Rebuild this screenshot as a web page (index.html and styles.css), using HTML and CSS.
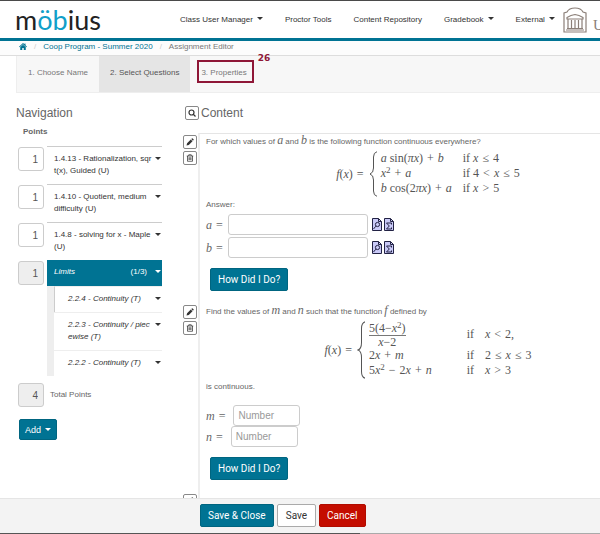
FILE: index.html
```html
<!DOCTYPE html>
<html lang="en">
<head>
<meta charset="utf-8">
<title>Assignment Editor</title>
<link rel="stylesheet" href="styles.css">
</head>
<body>
<svg class="defs" aria-hidden="true">
  <symbol id="pencil" viewBox="0 0 16 16"><path d="M1 15l1.200-4.600L9.600 3l3.400 3.400-7.400 7.400zM10.600 2l1.200-1.200q.7-.6 1.500.1l1.800 1.800q.7.800 0 1.500L13.900 5.400z"/></symbol>
  <symbol id="trash" viewBox="0 0 16 16"><path fill="none" stroke="currentColor" stroke-width="1.500" d="M1.500 4h13M5.500 4V1.500h5V4M3 4v10.500h10V4M6 6.500v5.500M8 6.500v5.500M10 6.500v5.500"/></symbol>
  <symbol id="search" viewBox="0 0 16 16"><g fill="none" stroke="currentColor" stroke-width="2.400"><circle cx="7" cy="7" r="5"/><path d="M10.500 10.500l4.500 4.500"/></g></symbol>
  <symbol id="preview" viewBox="0 0 10 13"><path class="sheet" d="M.5.5h6l3 3v9h-9z"/><path class="ink" d="M6.500.5v3h3M1.500 11l2.300-2.800"/><circle class="ink" cx="5.500" cy="6.500" r="2.100"/></symbol>
  <symbol id="sigma" viewBox="0 0 10 13"><path class="sheet" d="M.5.5h6l3 3v9h-9z"/><path class="ink" d="M6.500.5v3h3M7.500 6.500V5H2.500l2.800 3-2.800 3h5V9.500"/></symbol>
</svg>

<header class="topbar">
  <a class="brand" href="#">m<span>öb</span>ius</a>
  <nav class="menu">
    <a class="caret" href="#">Class User Manager</a>
    <a href="#">Proctor Tools</a>
    <a href="#">Content Repository</a>
    <a class="caret" href="#">Gradebook</a>
    <a class="caret" href="#">External</a>
  </nav>
  <svg class="crest" viewBox="0 0 24 26" aria-hidden="true">
    <path d="M1 25V6L4 5Q6 1 12 1Q18 1 20 5L23 6V25z"/>
    <path d="M4 10.500Q8 8 12 7.500Q16 8 20 10.500V12H4zM5 12v9M8.500 13v8M12 13v8M15.500 13v8M19 12v9M4 21.500h16M3 23h18"/>
  </svg>
  <span class="school">U</span>
</header>

<nav class="crumbs">
  <a href="#" aria-label="Home"><svg viewBox="0 0 16 14"><path d="M8 0l3 2.700V1h2v3.500l3 2.800-1 1L8 2.300 1 8.300l-1-1zM8 3.500l5.500 4.700V14H9.500v-4h-3v4h-4V8.200z"/></svg></a>
  <i>/</i>
  <a href="#">Coop Program - Summer 2020</a>
  <i>/</i>
  <span>Assignment Editor</span>
</nav>

<nav class="steps">
  <a href="#">1. Choose Name</a>
  <a class="current" href="#">2. Select Questions</a>
  <a class="marked" href="#"><span>3. Properties</span><b>26</b></a>
</nav>

<main class="work">
  <section class="side">
    <h2>Navigation</h2>
    <h3>Points</h3>
    <div class="item"><input class="pts" value="1" aria-label="Points 1.4.13"><div class="name caret">1.4.13 - Rationalization, sqr<br>t(x), Guided (U)</div></div>
    <div class="item"><input class="pts" value="1" aria-label="Points 1.4.10"><div class="name caret">1.4.10 - Quotient, medium<br>difficulty (U)</div></div>
    <div class="item"><input class="pts" value="1" aria-label="Points 1.4.8"><div class="name caret">1.4.8 - solving for x - Maple<br>(U)</div></div>
    <div class="item group">
      <input class="pts" value="1" readonly aria-label="Points Limits">
      <div class="limits">
        <div class="head caret"><em>Limits</em><span>(1/3)</span></div>
        <ul>
          <li class="caret open">2.2.4 - Continuity (T)</li>
          <li class="caret">2.2.3 - Continuity / piec<br>ewise (T)</li>
          <li class="caret">2.2.2 - Continuity (T)</li>
        </ul>
      </div>
    </div>
    <div class="total"><input class="pts" id="total" value="4" readonly><label for="total">Total Points</label></div>
    <button class="add caret">Add</button>
  </section>

  <section class="content">
    <div class="title"><button class="tool" aria-label="Search"><svg><use href="#search"/></svg></button><h2>Content</h2></div>

    <article class="question first">
      <div class="tools">
        <button class="tool" aria-label="Edit"><svg><use href="#pencil"/></svg></button>
        <button class="tool" aria-label="Delete"><svg><use href="#trash"/></svg></button>
      </div>
      <div class="body">
        <p>For which values of <var>a</var> and <var>b</var> is the following function continuous everywhere?</p>
        <div class="formula">
          <div class="math"><var>f</var>(<var>x</var>) <s>=</s></div>
          <svg class="brace" viewBox="0 0 8 46" preserveAspectRatio="none"><path d="M8 .7Q4.500 1.500 4.500 6V17Q4.500 22 1 23Q4.500 24 4.500 29V40Q4.500 44.500 8 45.300"/></svg>
          <div class="cases two math">
            <span><var>a</var> sin(<var>πx</var>) <s>+</s> <var>b</var></span><span>if <var>x</var> <s>≤</s> 4</span>
            <span><var>x</var><sup>2</sup> <s>+</s> <var>a</var></span><span>if 4 <s>&lt;</s> <var>x</var> <s>≤</s> 5</span>
            <span><var>b</var> cos(2<var>πx</var>) <s>+</s> <var>a</var></span><span>if <var>x</var> <s>&gt;</s> 5</span>
          </div>
        </div>
        <p>Answer:</p>
        <div class="answer"><label class="math" for="a"><var>a</var> <s>=</s></label><input id="a" class="field wide"><svg class="doc"><use href="#preview"/></svg><svg class="doc"><use href="#sigma"/></svg></div>
        <div class="answer"><label class="math" for="b"><var>b</var> <s>=</s></label><input id="b" class="field wide"><svg class="doc"><use href="#preview"/></svg><svg class="doc"><use href="#sigma"/></svg></div>
        <button class="btn check">How Did I Do?</button>
      </div>
    </article>

    <article class="question">
      <div class="tools">
        <button class="tool" aria-label="Edit"><svg><use href="#pencil"/></svg></button>
        <button class="tool" aria-label="Delete"><svg><use href="#trash"/></svg></button>
      </div>
      <div class="body">
        <p>Find the values of <var>m</var> and <var>n</var> such that the function <var>f</var> defined by</p>
        <div class="formula">
          <div class="math"><var>f</var>(<var>x</var>) <s>=</s></div>
          <svg class="brace tall" viewBox="0 0 8 46" preserveAspectRatio="none"><path d="M8 .7Q4.500 1.500 4.500 6V17Q4.500 22 1 23Q4.500 24 4.500 29V40Q4.500 44.500 8 45.300"/></svg>
          <div class="cases three math">
            <span class="frac"><span>5(4−<var>x</var><sup>2</sup>)</span><span><var>x</var>−2</span></span><span>if</span><span><var>x</var> <s>&lt;</s> 2,</span>
            <span>2<var>x</var> <s>+</s> <var>m</var></span><span>if</span><span>2 <s>≤</s> <var>x</var> <s>≤</s> 3</span>
            <span>5<var>x</var><sup>2</sup> <s>−</s> 2<var>x</var> <s>+</s> <var>n</var></span><span>if</span><span><var>x</var> <s>&gt;</s> 3</span>
          </div>
        </div>
        <p class="after">is continuous.</p>
        <div class="answer short"><label class="math" for="m"><var>m</var> <s>=</s></label><input id="m" class="field" placeholder="Number"></div>
        <div class="answer short"><label class="math" for="n"><var>n</var> <s>=</s></label><input id="n" class="field" placeholder="Number"></div>
        <button class="btn check">How Did I Do?</button>
      </div>
    </article>

    <article class="question">
      <div class="tools"><button class="tool" aria-label="Edit"><svg><use href="#pencil"/></svg></button></div>
      <div class="body"><p>Consider the function</p></div>
    </article>
  </section>
</main>

<footer class="actions">
  <button class="btn">Save &amp; Close</button>
  <button class="btn plain">Save</button>
  <button class="btn danger">Cancel</button>
</footer>
</body>
</html>
```
FILE: styles.css
```css
* { box-sizing: border-box; }
body {
  margin: 0;
  height: 100vh;
  display: flex;
  flex-direction: column;
  overflow: hidden;
  background: #fff;
  color: #666;
  font: 8px/12px "Liberation Sans", Arial, sans-serif;
}
a { color: inherit; text-decoration: none; }
h2, h3, p, ul { margin: 0; padding: 0; }
button, input { font-family: inherit; margin: 0; }
.defs { position: absolute; width: 0; height: 0; }

.caret::after {
  content: "";
  display: inline-block;
  border: 3px solid transparent;
  border-top-color: currentColor;
  border-bottom: 0;
  margin-left: 4px;
  vertical-align: 2px;
}

/* Top bar */
.topbar {
  flex: none;
  display: flex;
  align-items: center;
  height: 41px;
  padding-left: 15px;
  border-top: 1px solid #4a4a4a;
  border-bottom: 3px solid #007393;
  overflow: hidden;
  white-space: nowrap;
}
.brand { width: 165px; flex: none; color: #222; font: 400 27px/32px Lato, sans-serif; }
.brand span { color: #119fc9; }
.menu { display: flex; gap: 22px; color: #333; flex: none; }
.crest { flex: none; width: 24px; height: 26px; margin-left: 8px; fill: none; stroke: #8b7f78; stroke-width: 1.2; }
.school { margin: 10px 0 0 6px; color: #8b7f78; font: 15px/18px "Liberation Serif", serif; }

/* Breadcrumbs */
.crumbs {
  flex: none;
  display: flex;
  gap: 7px;
  height: 15px;
  padding-left: 19px;
  border-bottom: 1px solid #ddd;
  background: #fcfcfc;
  color: #777;
}
.crumbs a { color: #007393; }
.crumbs svg { width: 8px; height: 7px; margin-top: 2px; fill: #007393; display: block; }
.crumbs i { color: #ccc; font-style: normal; }

/* Wizard steps */
.steps {
  flex: none;
  display: flex;
  height: 37px;
  margin-left: 16px;
  border: 1px solid #eee;
  border-width: 0 0 1px 1px;
  background: #f7f7f7;
  color: #777;
  line-height: 34px;
}
.steps a { padding: 0 11px; }
.steps .current { background: #e5e5e5; color: #555; }
.marked { position: relative; }
.marked::before {
  content: "";
  position: absolute;
  inset: 4px 4px 9px 7px;
  border: 2px solid #8f1737;
}
.marked b {
  position: absolute;
  left: 100%;
  top: -3px;
  color: #8f1737;
  font: bold 9px/10px "DejaVu Sans", sans-serif;
}

/* Work area */
.work { flex: 1; min-height: 0; display: flex; overflow: hidden; }
h2 { font-size: 12px; line-height: 14px; font-weight: normal; }
.side { flex: none; width: 183px; padding: 13px 21px 0 16px; }
.side h3 { margin: 6px 0 8px 7px; font-size: 8px; line-height: 12px; }
.item { display: flex; align-items: flex-start; height: 38px; }
.pts {
  flex: none;
  width: 26px;
  height: 24px;
  margin: 1px 3px 0 2px;
  padding: 0 5px;
  border: 1px solid #ccc;
  border-radius: 3px;
  background: #fff;
  color: #555;
  font-size: 10px;
  text-align: right;
}
.pts[readonly] { background: #eee; }
.name { position: relative; flex: 1; border-top: 1px solid #ccc; padding: 6px 0 0 7px; color: #333; white-space: nowrap; }
.name::after, .limits .caret::after { position: absolute; right: 1px; top: 10px; }
.group { height: auto; }
.limits { flex: 1; color: #333; }
.head { position: relative; display: flex; justify-content: space-between; padding: 6px 15px 8px 7px; background: #007393; color: #fff; }
.limits ul { list-style: none; border-left: 7px solid #eee; font-style: italic; white-space: nowrap; }
.limits li { position: relative; padding: 6px 0 7px 14px; border-top: 1px solid #eee; }
.limits li.open { border-left: 1px solid #ccc; padding-left: 13px; }
.total { display: flex; align-items: center; gap: 3px; margin: 6px 0 12px; }
.add { width: 38px; height: 21px; margin-left: 3px; padding: 0; border: 1px solid #006580; border-radius: 2px; background: #007393; color: #fff; font-size: 9px; }

.content { flex: 1; min-width: 0; padding-top: 13px; }
.title { display: flex; gap: 2px; margin: 0 0 12px 2px; height: 15px; }
.tool {
  display: flex;
  align-items: center;
  justify-content: center;
  width: 14px;
  height: 14px;
  padding: 0;
  border: 1px solid #888;
  border-radius: 2px;
  background: #fff;
  color: #333;
}
.tool svg { width: 8px; height: 8px; fill: currentColor; }
.question { display: flex; }
.tools { flex: none; width: 15px; padding-top: 2px; display: flex; flex-direction: column; gap: 2px; }
.body { flex: 1; min-width: 0; border-left: 2px solid #eee; padding: 3px 0 12px 6px; white-space: nowrap; }
.math, .body var { font-family: "Liberation Serif", "Times New Roman", serif; font-size: 12px; }
.body p { line-height: 12px; }
.body p var { line-height: 1px; }
.math s { text-decoration: none; margin: 0 1px; }
.math sup { font-size: 9px; line-height: 0; vertical-align: 4px; }
.formula { display: flex; align-items: center; justify-content: center; margin-top: 2px; padding-left: 50px; color: #555; }
.brace { width: 8px; height: 46px; margin: 0 4px; flex: none; fill: none; stroke: currentColor; }
.tall { height: 58px; }
.cases { display: grid; align-items: center; line-height: 15px; padding: 1px 0; }
.two { grid-template-columns: auto auto; column-gap: 11px; }
.three { grid-template-columns: auto auto auto; column-gap: 11px; }
.three > :nth-child(3n+2) { padding-left: 24px; }
.frac { justify-self: start; text-align: center; line-height: 14px; }
.frac span { display: block; }
.frac span + span { border-top: 1px solid #777; line-height: 12px; }
.first .body { border-top: 1px solid #e5e5e5; padding-top: 2px; }
.first .formula + p { margin: 2px 0 3px; }
.answer { display: flex; align-items: center; gap: 2px; margin-bottom: 2px; }
.answer label { margin-right: 2px; }
.field { width: 67px; height: 21px; padding: 0 4px; border: 1px solid #ccc; border-radius: 3px; font-size: 10px; }
.field::placeholder { color: #999; }
.wide { width: 140px; margin-right: 2px; }
.short { margin: 0; gap: 5px; }
.body .after { margin: 2px 0 12px; }
.doc { width: 10px; height: 13px; }
.sheet { fill: #c9c9f7; stroke: #222244; }
.ink { fill: none; stroke: #222244; }

.btn {
  height: 23px;
  padding: 0 7px;
  border: 1px solid #006580;
  border-radius: 2px;
  background: #007393;
  color: #fff;
  font: 10px/20px Roboto, sans-serif;
}
.check { margin: 10px 0 0 4px; display: block; }
.plain { padding: 0 8px; background: #fff; border-color: #aaa; color: #333; }
.danger { background: #c40d00; border-color: #b00c00; }

.actions {
  flex: none;
  display: flex;
  gap: 3px;
  height: 36px;
  padding: 5px 0 0 200px;
  border-top: 1px solid #e5e5e5;
  background: linear-gradient(90deg, #555 60%, #aaa 60%) bottom / 100% 1px no-repeat #f3f3f3;
}
```
